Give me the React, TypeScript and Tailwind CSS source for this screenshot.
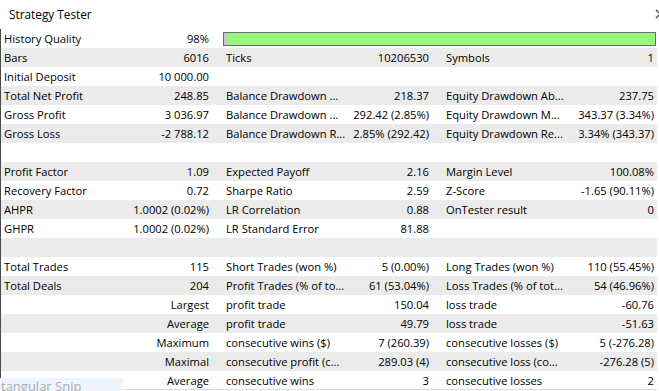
type Row = [string, string, string, string, string, string];

const rows: Row[] = [
  ["Bars", "6016", "Ticks", "10206530", "Symbols", "1"],
  ["Initial Deposit", "10 000.00", "", "", "", ""],
  ["Total Net Profit", "248.85", "Balance Drawdown ...", "218.37", "Equity Drawdown Ab...", "237.75"],
  ["Gross Profit", "3 036.97", "Balance Drawdown ...", "292.42 (2.85%)", "Equity Drawdown M...", "343.37 (3.34%)"],
  ["Gross Loss", "-2 788.12", "Balance Drawdown R...", "2.85% (292.42)", "Equity Drawdown Re...", "3.34% (343.37)"],
  ["", "", "", "", "", ""],
  ["Profit Factor", "1.09", "Expected Payoff", "2.16", "Margin Level", "100.08%"],
  ["Recovery Factor", "0.72", "Sharpe Ratio", "2.59", "Z-Score", "-1.65 (90.11%)"],
  ["AHPR", "1.0002 (0.02%)", "LR Correlation", "0.88", "OnTester result", "0"],
  ["GHPR", "1.0002 (0.02%)", "LR Standard Error", "81.88", "", ""],
  ["", "", "", "", "", ""],
  ["Total Trades", "115", "Short Trades (won %)", "5 (0.00%)", "Long Trades (won %)", "110 (55.45%)"],
  ["Total Deals", "204", "Profit Trades (% of to...", "61 (53.04%)", "Loss Trades (% of tot...", "54 (46.96%)"],
  ["", "Largest", "profit trade", "150.04", "loss trade", "-60.76"],
  ["", "Average", "profit trade", "49.79", "loss trade", "-51.63"],
  ["", "Maximum", "consecutive wins ($)", "7 (260.39)", "consecutive losses ($)", "5 (-276.28)"],
  ["", "Maximal", "consecutive profit (c...", "289.03 (4)", "consecutive loss (co...", "-276.28 (5)"],
  ["", "Average", "consecutive wins", "3", "consecutive losses", "2"],
];

function Cell({ label, value, cls }: { label: string; value: string; cls: string }) {
  return (
    <div className={`flex items-center justify-between gap-1 whitespace-nowrap ${cls}`}>
      <span>{label}</span>
      <span>{value}</span>
    </div>
  );
}

export default function App() {
  return (
    <div
      className="relative w-[659px] h-[391px] overflow-hidden bg-white text-black text-[11.2px] leading-[19px]"
      style={{ fontFamily: '"Open Sans", "Noto Sans", sans-serif' }}
    >
      <div className="flex h-[29px] items-center justify-between pl-[9px] pr-0">
        <span className="text-[11.8px]">Strategy Tester</span>
        <svg width="6" height="10" viewBox="0 0 6 10" className="mr-[-2px] mt-[-2px]">
          <path d="M1 1 L5 5 L1 9" fill="none" stroke="#333" strokeWidth="1.2" />
        </svg>
      </div>

      <div className="w-[657px] border-l border-[#4a4a4a]">
        <div className="flex h-[19px] bg-white">
          <Cell label="History Quality" value="98%" cls="w-[219px] pl-[3px] pr-[11px]" />
          <div className="flex flex-1 items-center pl-[3px] pr-[1px]">
            <div className="flex h-[14px] w-full border border-[#6d6d6d] bg-[#98f57b]">
              <div className="w-[4px] bg-[#c8c8c8]" />
            </div>
          </div>
        </div>
        {rows.map((r, i) => (
          <div
            key={i}
            className={`flex h-[19px] ${i % 2 === 0 ? "bg-[#ebebeb]" : "bg-white"} ${
              i === rows.length - 1 ? "border-b border-[#dcdcdc]" : ""
            }`}
          >
            <Cell label={r[0]} value={r[1]} cls="w-[219px] pl-[3px] pr-[11px]" />
            <Cell label={r[2]} value={r[3]} cls="w-[220px] pl-[6px] pr-[11px]" />
            <Cell label={r[4]} value={r[5]} cls="flex-1 pl-[6px] pr-[3px]" />
          </div>
        ))}
      </div>

      <div className="absolute bottom-0 left-0 flex h-[13px] w-[123px] items-start overflow-hidden bg-[#eef5fc] pl-[1px] text-[13px] leading-[17px] text-[#a8acb0]">
        tangular Snip
      </div>
    </div>
  );
}
